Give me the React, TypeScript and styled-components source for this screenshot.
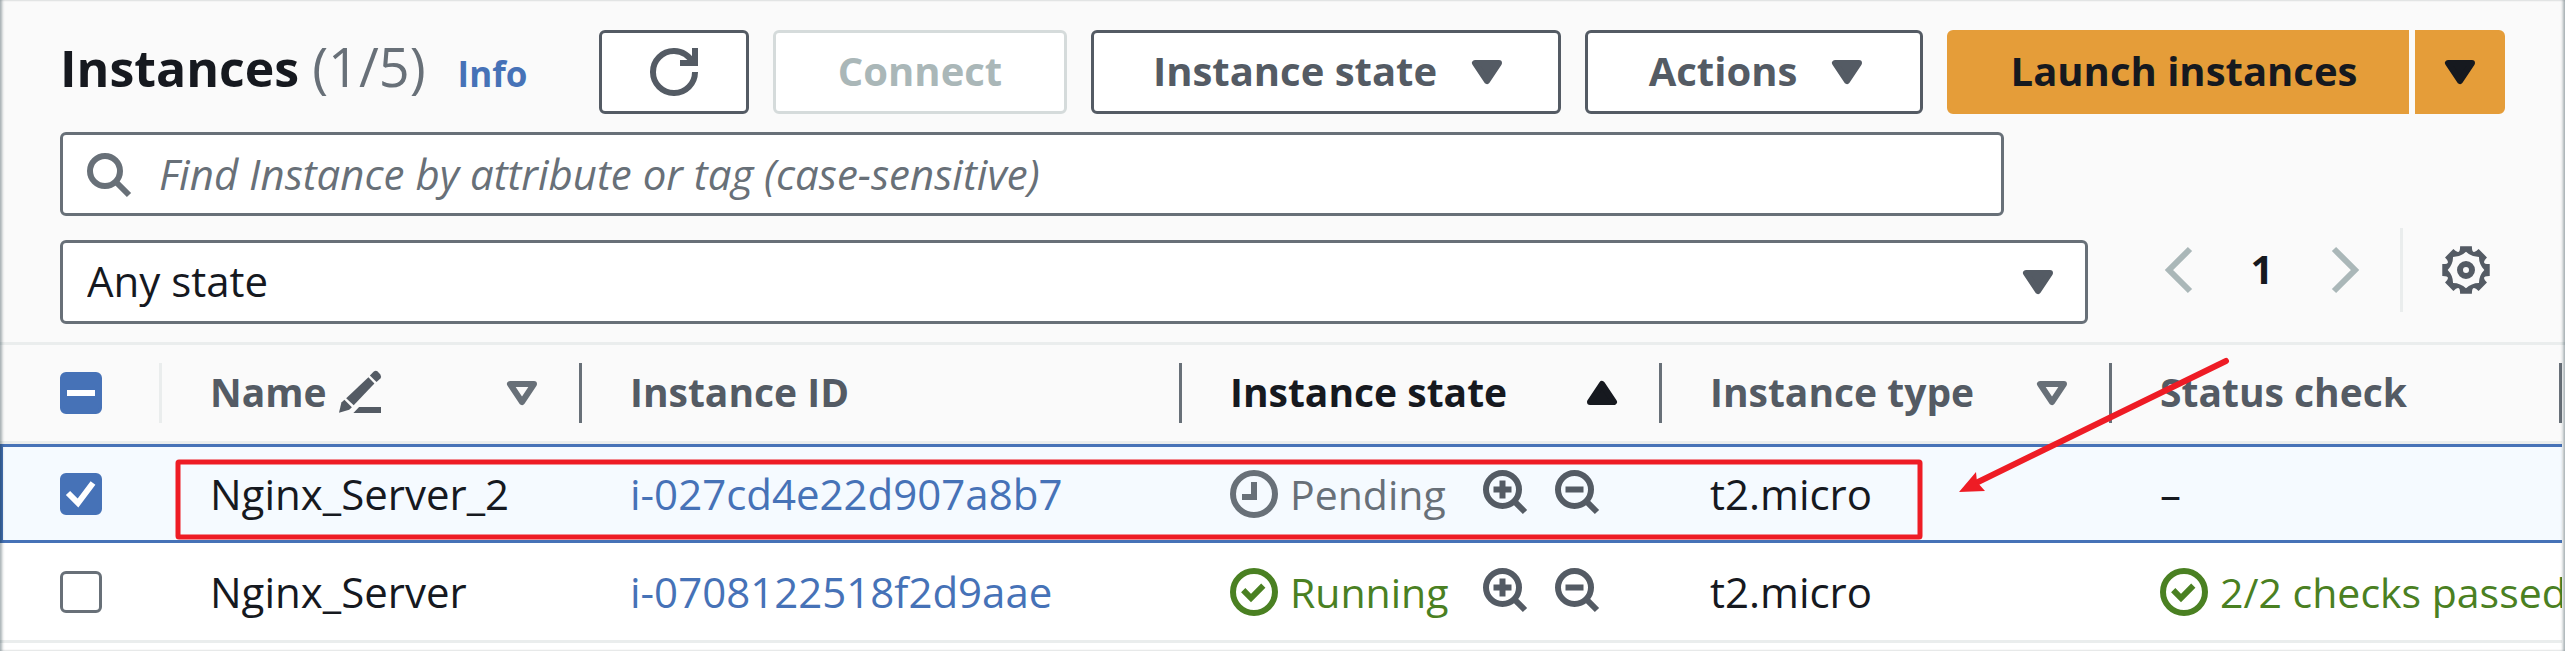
import React, { useEffect, useRef, useState } from 'react';
import styled, { createGlobalStyle, css } from 'styled-components';

const color = {
  ink: '#16191f',
  control: '#545b64',
  muted: '#687078',
  link: '#4672b7',
  disabled: '#aab7b8',
  disabledBorder: '#d5dbdb',
  line: '#eaeded',
  header: '#fafafa',
  selected: '#f5faff',
  success: '#4a8022',
  primary: '#e59d39',
  note: '#ee1c25',
};

const GlobalStyle = createGlobalStyle`
  *, *::before, *::after { box-sizing: border-box; }
  body { margin: 0; background: #fff; }
  body, button, input, select {
    font-family: "Open Sans", "Noto Sans", sans-serif;
    font-size: 42px;
    line-height: 60px;
    color: ${color.ink};
  }
`;

/* ---------- icons ---------- */

const Svg = styled.svg`
  display: block;
  flex: none;
  width: 48px;
  height: 48px;
  fill: none;
  stroke: currentColor;
  stroke-width: 2;
`;

const RefreshIcon = () => (
  <Svg viewBox="0 0 16 16">
    <path d="M10 5h5V0" />
    <path d="M15 8a6.957 6.957 0 0 1-7 7 6.957 6.957 0 0 1-7-7 6.957 6.957 0 0 1 7-7 6.87 6.87 0 0 1 6.3 4" />
  </Svg>
);

const SearchIcon = () => (
  <Svg viewBox="0 0 16 16">
    <circle cx="7" cy="7" r="5" />
    <path d="m10.5 10.5 4.5 4.5" />
  </Svg>
);

const ZoomIcon = ({ plus }: { plus?: boolean }) => (
  <Svg viewBox="0 0 16 16">
    <circle cx="7.5" cy="7.5" r="5.5" />
    <path d="m11.3 11.3 3.7 3.7M4.5 7.5h6" />
    {plus && <path d="M7.5 4.5v6" />}
  </Svg>
);

const CaretIcon = ({ up, hollow }: { up?: boolean; hollow?: boolean }) => (
  <Svg viewBox="0 0 16 16" strokeLinejoin="round">
    <path d={up ? 'M8 5l4 6H4l4-6z' : 'M4 5h8l-4 6-4-6z'} fill={hollow ? 'none' : 'currentColor'} />
  </Svg>
);

const ChevronIcon = ({ next }: { next?: boolean }) => (
  <Svg viewBox="0 0 16 16">
    <path d={next ? 'm5 1 7 7-7 7' : 'm11 1-7 7 7 7'} />
  </Svg>
);

const CheckCircleIcon = () => (
  <Svg viewBox="0 0 16 16">
    <circle cx="8" cy="8" r="7" />
    <path d="M4.4 7.4 7 10l4.1-4.1" />
  </Svg>
);

const PendingIcon = () => (
  <Svg viewBox="0 0 16 16">
    <circle cx="8" cy="8" r="7" />
    <path d="M8 4v5H4" />
  </Svg>
);

const EditIcon = () => (
  <Svg viewBox="0 0 16 16">
    <g fill="currentColor" stroke="none">
      <path d="M1 14.9 1.8 11.5 2.8 10.6 5.3 13.1 4.4 13.9Z" />
      <path d="M3.4 10.1 10.8 3.1 12.8 5.2 5.9 12.4Z" />
      <path d="M11.3 2.5 12.6 1.2Q13.2.7 13.8 1.1L14.8 2.2Q15.2 2.9 14.8 3.5L13.5 4.7Z" />
      <path d="M7.7 13H15v2H5.8Z" />
    </g>
  </Svg>
);

const polar = (r: number, deg: number) => {
  const a = (deg * Math.PI) / 180;
  return `${(8 + r * Math.sin(a)).toFixed(2)} ${(8 - r * Math.cos(a)).toFixed(2)}`;
};

const teeth = Array.from({ length: 8 }, (_, i) => i * 45);
const gearOuter = teeth.map((d) => `L${polar(8.15, d - 14)}L${polar(8.15, d + 14)}Q${polar(5, d + 22.5)} ${polar(8.15, d + 31)}`).join('');
const gearInner = teeth.map((d) => `Q${polar(4.7, d + 22.5)} ${polar(6.1, d + 45)}`).join('');

const GearIcon = () => (
  <Svg viewBox="0 0 16 16">
    <path
      fill="currentColor"
      stroke="none"
      fillRule="evenodd"
      d={`M${polar(8.15, -14)}${gearOuter}ZM${polar(6.1, 0)}${gearInner}Z`}
    />
    <circle cx="8" cy="8" r="2" />
  </Svg>
);

/* ---------- page ---------- */

const Panel = styled.main`
  position: relative;
  overflow: hidden;
  background: #fff;
  padding-bottom: 8px;

  &::after {
    content: '';
    position: absolute;
    inset: 0;
    pointer-events: none;
    box-shadow: inset 3px 0 3px -1px rgba(0, 28, 36, 0.35), inset -3px 0 3px -1px rgba(0, 28, 36, 0.35);
  }
`;

const PanelHeader = styled.header`
  background: ${color.header};
  padding: 30px 60px 18px;
`;

const Toolbar = styled.div`
  display: flex;
  align-items: flex-start;
  justify-content: space-between;
  gap: 24px;
`;

const Heading = styled.div`
  display: flex;
  align-items: baseline;
  gap: 32px;
  white-space: nowrap;
`;

const Title = styled.h1`
  margin: 0;
  font-size: 50px;
  line-height: 72px;
  font-weight: 700;
`;

const Count = styled.span`
  font-size: 54px;
  font-weight: 400;
  color: ${color.muted};
`;

const InfoLink = styled.a`
  font-size: 35px;
  font-weight: 700;
  color: ${color.link};
  text-decoration: none;
`;

const Actions = styled.div`
  display: flex;
  gap: 24px;
`;

const ButtonPair = styled.div`
  display: flex;
  gap: 6px;
  background: linear-gradient(#fff, #fff) center / 50% 100% no-repeat;
`;

type ButtonProps = { $width: number; $variant?: 'normal' | 'primary'; $side?: 'left' | 'right'; $menu?: boolean };

const Button = styled.button<ButtonProps>`
  display: flex;
  align-items: center;
  justify-content: center;
  gap: 26px;
  min-width: ${(p) => p.$width}px;
  height: 84px;
  padding: 0 0 0 ${(p) => (p.$menu ? 12 : 0)}px;
  border: 3px solid ${color.control};
  border-radius: 6px;
  background: #fff;
  color: ${color.control};
  font-size: 40px;
  font-weight: 700;
  white-space: nowrap;

  &:disabled {
    color: ${color.disabled};
    border-color: ${color.disabledBorder};
  }

  ${(p) =>
    p.$variant === 'primary' &&
    css`
      border-color: ${color.primary};
      background: ${color.primary};
      color: ${color.ink};
    `}
  ${(p) => p.$side === 'left' && 'border-radius: 6px 0 0 6px; padding-left: 12px;'}
  ${(p) => p.$side === 'right' && 'border-radius: 0 6px 6px 0;'}
`;

const ButtonText = styled.span`
  padding-bottom: 3px;
`;

const SearchField = styled.label`
  display: flex;
  align-items: center;
  gap: 27px;
  width: 79.5%;
  height: 84px;
  margin-top: 18px;
  padding: 0 21px;
  border: 3px solid ${color.muted};
  border-radius: 6px;
  background: #fff;
  color: ${color.muted};
`;

const SearchInput = styled.input`
  flex: 1;
  min-width: 0;
  padding: 0;
  border: 0;
  outline: 0;
  background: transparent;

  &::placeholder {
    color: ${color.muted};
    font-style: italic;
    opacity: 1;
  }
`;

const FilterRow = styled.div`
  display: flex;
  align-items: flex-start;
  justify-content: space-between;
  gap: 69px;
  padding-top: 12px;
`;

const SelectField = styled.div`
  flex: 1;
  display: grid;
  align-items: center;
  margin-top: 12px;
  color: ${color.control};

  & > * {
    grid-area: 1 / 1;
  }

  & > svg {
    justify-self: end;
    margin-right: 26px;
    pointer-events: none;
  }
`;

const Select = styled.select`
  appearance: none;
  width: 100%;
  height: 84px;
  padding: 0 90px 3px 24px;
  border: 3px solid ${color.muted};
  border-radius: 6px;
  background: #fff;
`;

const Pager = styled.nav`
  display: flex;
  align-items: center;
  height: 84px;
`;

const PlainButton = styled.button`
  display: block;
  padding: 0;
  border: 0;
  background: none;
  color: ${color.control};

  &:disabled {
    color: ${color.disabled};
  }
`;

const PageButton = styled(PlainButton)`
  width: 114px;
  padding-bottom: 3px;
  font-size: 40px;
  font-weight: 700;
  color: ${color.ink};
`;

const Preferences = styled.div`
  display: flex;
  align-items: center;
  height: 84px;
  margin-left: 33px;
  padding: 0 15px 0 39px;
  border-left: 3px solid ${color.line};
`;

/* ---------- table ---------- */

const TableArea = styled.section`
  position: relative;
  padding-right: 3px;
  border-top: 3px solid ${color.line};
`;

const Table = styled.table`
  width: 100%;
  table-layout: fixed;
  border-collapse: separate;
  border-spacing: 0;
`;

const Col = styled.col<{ $width?: number }>`
  width: ${(p) => (p.$width ? `${p.$width}px` : 'auto')};
`;

const HeadCell = styled.th`
  height: 99px;
  padding: 0;
  border-bottom: 3px solid ${color.line};
  background: ${color.header};
  text-align: left;
`;

const HeadContent = styled.div<{ $active?: boolean; $first?: boolean }>`
  display: flex;
  align-items: center;
  justify-content: space-between;
  height: 60px;
  padding: 0 33px 0 ${(p) => (p.$first ? 60 : 48)}px;
  border-right: 3px solid ${(p) => (p.$first ? color.line : color.muted)};
  color: ${(p) => (p.$active ? color.ink : color.control)};
  font-size: 39px;
  font-weight: 700;
  white-space: nowrap;
`;

const HeadText = styled.span`
  display: flex;
  align-items: center;
  gap: 9px;
  padding-bottom: 2px;
`;

const SortMark = styled(PlainButton)<{ $active?: boolean }>`
  color: ${(p) => (p.$active ? color.ink : color.muted)};
`;

const Row = styled.tr<{ $selected?: boolean }>`
  & > td {
    height: 100px;
    border-bottom: 3px solid ${color.line};
  }

  ${(p) =>
    p.$selected &&
    css`
      & > td {
        height: 99px;
        border-top: 3px solid ${color.link};
        border-bottom-color: ${color.link};
        background: ${color.selected};
      }
      & > td:first-child {
        border-left: 3px solid ${color.link};
      }
    `}
`;

const Cell = styled.td`
  padding: 0 0 0 48px;
  overflow: hidden;
  white-space: nowrap;
`;

const CheckCell = styled.td<{ $selected?: boolean }>`
  padding: 0 0 0 ${(p) => (p.$selected ? 57 : 60)}px;
`;

const InstanceLink = styled.a`
  color: ${color.link};
  text-decoration: none;
`;

const StateLine = styled.div`
  display: flex;
  align-items: center;
  gap: 24px;
`;

const ZoomButton = styled(PlainButton)`
  padding-bottom: 6px;
`;

const Status = styled.span<{ $tone: 'pending' | 'success' }>`
  display: flex;
  align-items: center;
  gap: 12px;
  min-width: 226px;
  font-size: 41px;
  color: ${(p) => (p.$tone === 'success' ? color.success : color.muted)};
`;

const CheckLabel = styled.label`
  display: grid;
  width: 42px;
  height: 42px;

  & > * {
    grid-area: 1 / 1;
  }
`;

const CheckInput = styled.input`
  appearance: none;
  width: 42px;
  height: 42px;
  margin: 0;
  border: 3px solid ${color.muted};
  border-radius: 6px;
  background: #fff;

  &:checked,
  &:indeterminate {
    border-color: ${color.link};
    background: ${color.link};
  }
`;

const CheckMark = styled.svg`
  width: 42px;
  height: 42px;
  fill: none;
  stroke: #fff;
  stroke-width: 6;
  pointer-events: none;
`;

const Annotation = styled.svg`
  position: absolute;
  left: 170px;
  top: 0;
  width: 2080px;
  height: 210px;
  pointer-events: none;
`;

type CheckboxProps = { label: string; checked: boolean; mixed?: boolean; onChange: () => void };

const Checkbox = ({ label, checked, mixed = false, onChange }: CheckboxProps) => {
  const ref = useRef<HTMLInputElement>(null);
  useEffect(() => {
    if (ref.current) ref.current.indeterminate = mixed;
  }, [mixed]);
  return (
    <CheckLabel>
      <CheckInput ref={ref} type="checkbox" aria-label={label} checked={checked} onChange={onChange} />
      <CheckMark viewBox="0 0 42 42">
        {mixed ? <path d="M7 21h28" /> : checked ? <path d="m8 20 10 10L33 10" /> : null}
      </CheckMark>
    </CheckLabel>
  );
};

type Instance = { name: string; id: string; state: 'Pending' | 'Running'; type: string; check?: string };

const instances: Instance[] = [
  { name: 'Nginx_Server_2', id: 'i-027cd4e22d907a8b7', state: 'Pending', type: 't2.micro' },
  { name: 'Nginx_Server', id: 'i-0708122518f2d9aae', state: 'Running', type: 't2.micro', check: '2/2 checks passed' },
];

export default function App() {
  const [selected, setSelected] = useState<string[]>([instances[0].id]);
  const [query, setQuery] = useState('');

  const toggle = (id: string) =>
    setSelected((s) => (s.includes(id) ? s.filter((x) => x !== id) : [...s, id]));
  const all = selected.length === instances.length;
  const toggleAll = () => setSelected(all ? [] : instances.map((i) => i.id));

  return (
    <>
      <GlobalStyle />
      <Panel>
        <PanelHeader>
          <Toolbar>
            <Heading>
              <Title>
                Instances <Count>({selected.length}/5)</Count>
              </Title>
              <InfoLink href="#info">Info</InfoLink>
            </Heading>
            <Actions>
              <Button $width={150} aria-label="Refresh">
                <RefreshIcon />
              </Button>
              <Button $width={294} disabled>
                <ButtonText>Connect</ButtonText>
              </Button>
              <Button $width={470} $menu>
                <ButtonText>Instance state</ButtonText>
                <CaretIcon />
              </Button>
              <Button $width={338} $menu>
                <ButtonText>Actions</ButtonText>
                <CaretIcon />
              </Button>
              <ButtonPair>
                <Button $width={462} $variant="primary" $side="left">
                  <ButtonText>Launch instances</ButtonText>
                </Button>
                <Button $width={90} $variant="primary" $side="right" aria-label="More launch options">
                  <CaretIcon />
                </Button>
              </ButtonPair>
            </Actions>
          </Toolbar>

          <SearchField>
            <SearchIcon />
            <SearchInput
              type="text"
              aria-label="Find Instance"
              placeholder="Find Instance by attribute or tag (case-sensitive)"
              value={query}
              onChange={(e) => setQuery(e.target.value)}
            />
          </SearchField>

          <FilterRow>
            <SelectField>
              <Select aria-label="Instance state filter">
                <option>Any state</option>
              </Select>
              <CaretIcon />
            </SelectField>
            <Pager aria-label="Pagination">
              <PlainButton disabled aria-label="Previous page">
                <ChevronIcon />
              </PlainButton>
              <PageButton>1</PageButton>
              <PlainButton disabled aria-label="Next page">
                <ChevronIcon next />
              </PlainButton>
              <Preferences>
                <PlainButton aria-label="Preferences">
                  <GearIcon />
                </PlainButton>
              </Preferences>
            </Pager>
          </FilterRow>
        </PanelHeader>

        <TableArea>
          <Table>
            <colgroup>
              <Col $width={162} />
              <Col $width={420} />
              <Col $width={600} />
              <Col $width={480} />
              <Col $width={450} />
              <Col />
            </colgroup>
            <thead>
              <tr>
                <HeadCell>
                  <HeadContent $first>
                    <Checkbox label="Select all" checked={all} mixed={selected.length > 0 && !all} onChange={toggleAll} />
                  </HeadContent>
                </HeadCell>
                <HeadCell>
                  <HeadContent>
                    <HeadText>
                      Name
                      <EditIcon />
                    </HeadText>
                    <SortMark aria-label="Sort by name">
                      <CaretIcon hollow />
                    </SortMark>
                  </HeadContent>
                </HeadCell>
                <HeadCell>
                  <HeadContent>
                    <HeadText>Instance ID</HeadText>
                  </HeadContent>
                </HeadCell>
                <HeadCell>
                  <HeadContent $active>
                    <HeadText>Instance state</HeadText>
                    <SortMark $active aria-label="Sort by state">
                      <CaretIcon up />
                    </SortMark>
                  </HeadContent>
                </HeadCell>
                <HeadCell>
                  <HeadContent>
                    <HeadText>Instance type</HeadText>
                    <SortMark aria-label="Sort by type">
                      <CaretIcon hollow />
                    </SortMark>
                  </HeadContent>
                </HeadCell>
                <HeadCell>
                  <HeadContent>
                    <HeadText>Status check</HeadText>
                  </HeadContent>
                </HeadCell>
              </tr>
            </thead>
            <tbody>
              {instances.map((item) => {
                const on = selected.includes(item.id);
                return (
                  <Row key={item.id} $selected={on}>
                    <CheckCell $selected={on}>
                      <Checkbox label={`Select ${item.name}`} checked={on} onChange={() => toggle(item.id)} />
                    </CheckCell>
                    <Cell>{item.name}</Cell>
                    <Cell>
                      <InstanceLink href={`#${item.id}`}>{item.id}</InstanceLink>
                    </Cell>
                    <Cell>
                      <StateLine>
                        <Status $tone={item.state === 'Running' ? 'success' : 'pending'}>
                          {item.state === 'Running' ? <CheckCircleIcon /> : <PendingIcon />}
                          {item.state}
                        </Status>
                        <ZoomButton aria-label={`Include ${item.state}`}>
                          <ZoomIcon plus />
                        </ZoomButton>
                        <ZoomButton aria-label={`Exclude ${item.state}`}>
                          <ZoomIcon />
                        </ZoomButton>
                      </StateLine>
                    </Cell>
                    <Cell>{item.type}</Cell>
                    <Cell>
                      {item.check ? (
                        <Status $tone="success">
                          <CheckCircleIcon />
                          {item.check}
                        </Status>
                      ) : (
                        '–'
                      )}
                    </Cell>
                  </Row>
                );
              })}
            </tbody>
          </Table>
          <Annotation viewBox="0 0 2080 210" aria-hidden="true">
            <rect x="8" y="117" width="1742" height="75" rx="1" fill="none" stroke={color.note} strokeWidth="5" />
            <path d="M2056 16 1806 138" stroke={color.note} strokeWidth="6" strokeLinecap="round" />
            <path d="M1789 147 1806 127 1807 137 1815 146Z" fill={color.note} />
          </Annotation>
        </TableArea>
      </Panel>
    </>
  );
}
